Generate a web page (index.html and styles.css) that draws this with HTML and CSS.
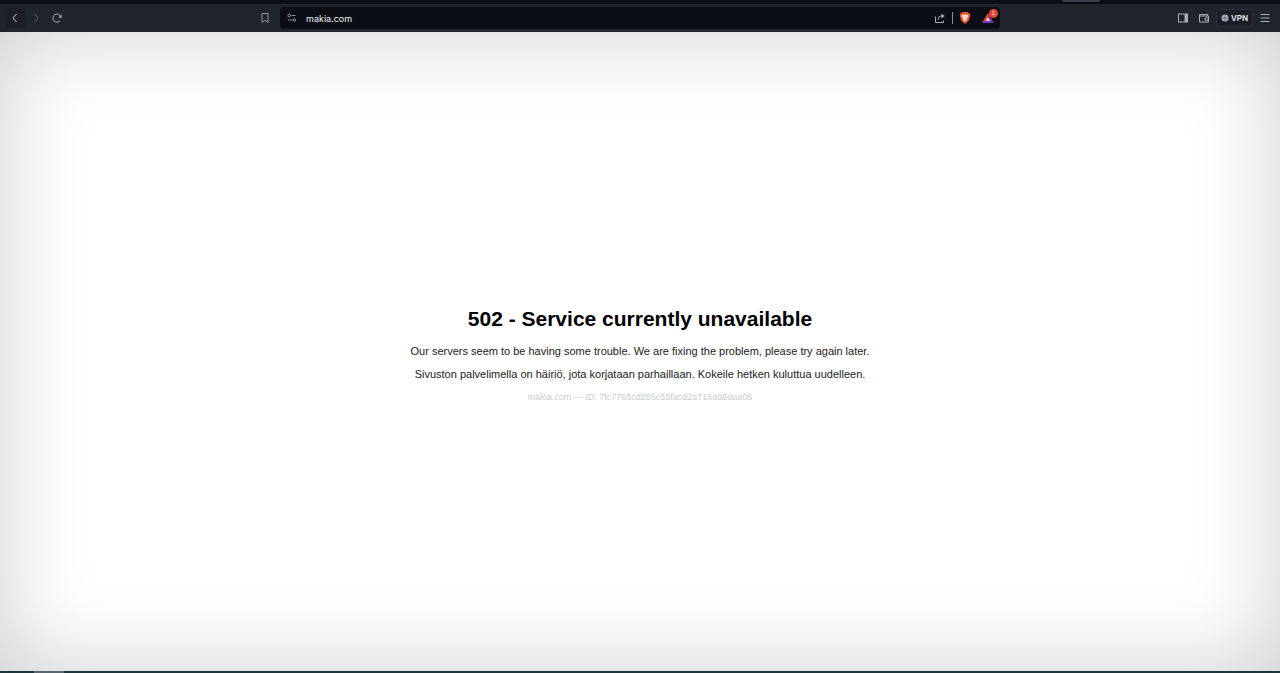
FILE: index.html
```html
<!DOCTYPE html>
<html lang="en">
<head>
  <meta charset="UTF-8">
  <meta name="viewport" content="width=device-width, initial-scale=1.0">
  <title>makia.com</title>
  <link rel="stylesheet" href="styles.css">
</head>
<body>
  <div class="tab-strip"><span class="tab-edge"></span></div>

  <!-- Browser toolbar -->
  <header class="toolbar">
    <div class="nav-buttons">
      <button class="icon-button back" type="button" aria-label="Back">
        <svg width="12" height="12" viewBox="0 0 12 12"><path d="M7.5 2 L4 6 L7.5 10"/></svg>
      </button>
      <button class="icon-button forward" type="button" aria-label="Forward" disabled>
        <svg width="12" height="12" viewBox="0 0 12 12"><path d="M4.5 2 L8 6 L4.5 10"/></svg>
      </button>
      <button class="icon-button reload" type="button" aria-label="Reload">
        <svg width="12" height="12" viewBox="0 0 12 12"><path d="M9.2 8.6 A4.1 4.1 0 1 1 9.8 4.6"/><path d="M10.6 2.6 V5.8 H7.4 Z" class="fill"/></svg>
      </button>
      <button class="icon-button bookmark" type="button" aria-label="Bookmark">
        <svg width="12" height="12" viewBox="0 0 12 12"><path d="M3 1.5 H9 V10.5 L6 8.2 L3 10.5 Z"/></svg>
      </button>
    </div>

    <div class="address-bar">
      <button class="icon-button settings" type="button" aria-label="Site settings">
        <svg width="12" height="12" viewBox="0 0 12 12"><circle cx="3.2" cy="3.5" r="1.3"/><path d="M5.5 3.5 H9.5 M2 8 H6"/><circle cx="8.3" cy="8" r="1.3"/></svg>
      </button>
      <input class="address" type="text" value="makia.com" aria-label="Address">
      <button class="icon-button share" type="button" aria-label="Share">
        <svg width="12" height="12" viewBox="0 0 12 12"><path d="M1.5 4.5 V10.5 H9.5 V8.5 M4 8 C4 5.2 5.5 4 8 4"/><path d="M7.5 1.5 L10.5 4 L7.5 6.5 Z" class="fill"/></svg>
      </button>
      <span class="divider"></span>
      <button class="icon-button shield" type="button" aria-label="Shields">
        <svg width="12" height="14" viewBox="0 0 12 14">
          <path d="M3.5 1 H8.5 L9.6 2.2 L11.2 2.4 L11 5 L9.8 9.6 L6 13 L2.2 9.6 L1 5 L.8 2.4 L2.4 2.2 Z" fill="#f4552c"/>
          <path d="M3 4 L5 3.6 L6 4.1 L7 3.6 L9 4 L9.4 5.6 L7.6 7.6 L8 8.8 L6 10.6 L4 8.8 L4.4 7.6 L2.6 5.6 Z" fill="#fff0e8"/>
          <path d="M3.8 5.2 L5.3 5.6 M8.2 5.2 L6.7 5.6 M6 5.6 V7.5 M5 8.5 L6 8 L7 8.5" fill="none" stroke="#f4552c" stroke-width=".4"/>
        </svg>
      </button>
      <button class="icon-button rewards" type="button" aria-label="Rewards, 1 notification">
        <svg width="14" height="12" viewBox="0 0 14 12">
          <path d="M7 1 L1 11 L7 7.5 Z" fill="#ff4b2b"/>
          <path d="M7 1 L13 11 L7 7.5 Z" fill="#a0318f"/>
          <path d="M1 11 H13 L7 7.5 Z" fill="#6a3bd0"/>
          <path d="M7 5.4 L9 8.8 H5 Z" fill="#fff"/>
        </svg>
        <span class="badge">1</span>
      </button>
    </div>

    <div class="tools">
      <button class="icon-button" type="button" aria-label="Sidebar">
        <svg width="12" height="12" viewBox="0 0 12 12"><rect x="1.5" y="2" width="9" height="8"/><path d="M7.5 2 H10.5 V10 H7.5 Z" class="fill"/></svg>
      </button>
      <button class="icon-button" type="button" aria-label="Wallet">
        <svg width="12" height="12" viewBox="0 0 12 12"><path d="M1.5 4 V2.5 H9.5 V4 M1.5 4 H10.5 V10 H1.5 Z M10.5 6 H7 V8.2 H10.5"/></svg>
      </button>
      <button class="vpn" type="button">
        <svg width="8" height="8" viewBox="0 0 8 8"><circle cx="4" cy="4" r="3.5" fill="#aeb2bd"/><path d="M1 4 H7 M4 1 V7" stroke="#5c606c" stroke-width=".7"/></svg>
        VPN
      </button>
      <button class="icon-button menu" type="button" aria-label="Menu">
        <svg width="12" height="12" viewBox="0 0 12 12"><path d="M1.5 2.5 H10.5 M1.5 6 H10.5 M1.5 9.5 H10.5"/></svg>
      </button>
    </div>
  </header>

  <!-- Error page -->
  <main class="page">
    <h1>502 - Service currently unavailable</h1>
    <p>Our servers seem to be having some trouble. We are fixing the problem, please try again later.</p>
    <p lang="fi">Sivuston palvelimella on häiriö, jota korjataan parhaillaan. Kokeile hetken kuluttua uudelleen.</p>
    <p class="request-id">makia.com — ID: 7fc7765cd285c55facd2a716ab6daa06</p>
  </main>

  <div class="taskbar"><span class="taskbar-item"></span></div>
</body>
</html>
```
FILE: styles.css
```css
* {
  margin: 0;
  padding: 0;
  box-sizing: border-box;
}
body {
  min-height: 100vh;
  display: flex;
  flex-direction: column;
  background: #fff;
  color: #000;
  font-family: "Liberation Sans", Arial, sans-serif;
}
button,
input {
  border: 0;
  background: none;
  font: inherit;
  color: inherit;
}

.tab-strip {
  height: 4px;
  padding-right: 180px;
  display: flex;
  justify-content: flex-end;
  background: #0c0e15;
}
.tab-edge {
  width: 38px;
  height: 2px;
  border-radius: 0 0 2px 2px;
  background: #3a3e4a;
}

/* Toolbar */
.toolbar {
  height: 28px;
  display: grid;
  grid-template-columns: 1fr minmax(0, 720px) 1fr;
  align-items: center;
  background: #20242d;
  color: #a9adb8;
}
.icon-button {
  width: 20px;
  height: 20px;
  display: flex;
  flex-shrink: 0;
  align-items: center;
  justify-content: center;
  border-radius: 4px;
}
.icon-button path,
.icon-button circle,
.icon-button rect {
  fill: none;
  stroke: currentColor;
}
.icon-button .fill {
  fill: currentColor;
  stroke: none;
}
.nav-buttons {
  display: flex;
  gap: 1px;
  padding: 0 5px;
}
.back {
  background: #1c1f28;
  color: #c4c7cf;
}
.forward {
  color: #5b5f6b;
}
.bookmark {
  margin-left: auto;
  color: #8f939e;
}

.address-bar {
  height: 22px;
  display: flex;
  align-items: center;
  padding: 0 2px;
  border-radius: 4px;
  background: #0c0e16;
}
.settings {
  color: #8f939e;
}
.address {
  flex: 1;
  min-width: 0;
  padding-left: 4px;
  font-family: Inter, sans-serif;
  font-size: 9px;
  color: #eceef2;
}
.divider {
  width: 1px;
  height: 12px;
  margin: 0 2px;
  background: #8a8d96;
}
.shield path,
.rewards path {
  fill: revert-layer;
  stroke: revert-layer;
}
.rewards {
  position: relative;
  margin-left: 3px;
}
.badge {
  position: absolute;
  top: 1px;
  right: 0;
  width: 9px;
  height: 9px;
  border-radius: 50%;
  background: #e5452f;
  color: #fff;
  font-size: 6px;
  line-height: 9px;
  text-align: center;
}

.tools {
  display: flex;
  align-items: center;
  justify-content: flex-end;
  gap: 1px;
  padding-right: 5px;
}
.vpn {
  height: 18px;
  display: flex;
  align-items: center;
  gap: 2px;
  margin: 0 1px;
  padding: 0 4px;
  border: 1px solid #2b2f39;
  border-radius: 4px;
  background: #1b1e27;
  color: #eceef2;
  font-family: Inter, sans-serif;
  font-size: 8px;
  font-weight: 600;
}

/* Error page */
.page {
  flex: 1;
  display: flex;
  flex-direction: column;
  align-items: center;
  justify-content: center;
  gap: 10px;
  padding: 20px;
  box-shadow: inset 0 0 90px rgba(0, 0, 0, 0.2);
  text-align: center;
}
.page h1 {
  margin: 5px 0 3px;
  font-size: 21px;
  line-height: 26px;
}
.page p {
  font-size: 11px;
  line-height: 13px;
  color: #222;
}
.page .request-id {
  font-size: 9px;
  line-height: 12px;
  color: #ccc;
}

.taskbar {
  height: 2px;
  padding-left: 34px;
  background: #1f343d;
}
.taskbar-item {
  display: block;
  width: 30px;
  height: 2px;
  background: #59666d;
}
```
